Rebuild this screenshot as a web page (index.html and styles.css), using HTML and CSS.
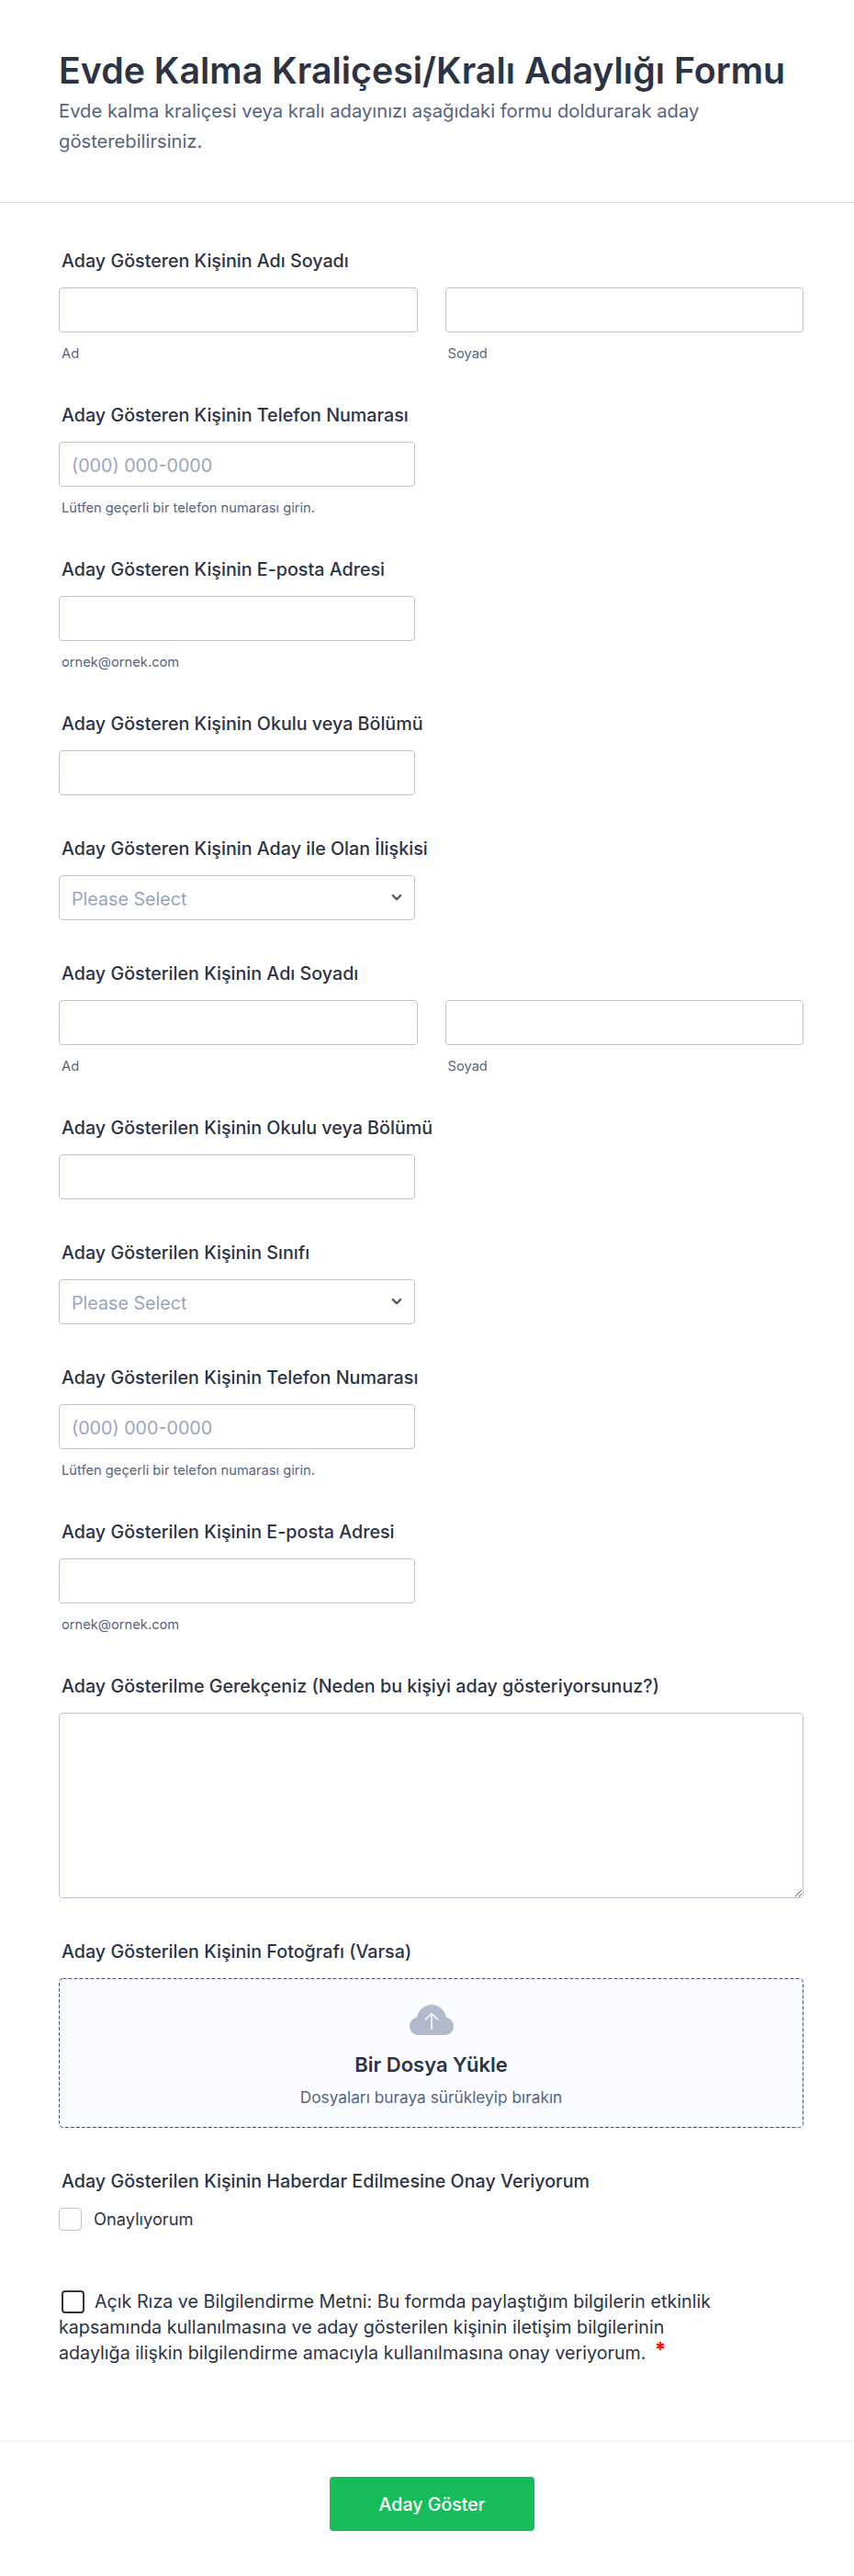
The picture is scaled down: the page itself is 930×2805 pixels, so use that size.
FILE: index.html
```html
<!DOCTYPE html>
<html lang="tr">
<head>
<meta charset="utf-8">
<title>Evde Kalma Kraliçesi/Kralı Adaylığı Formu</title>
<link rel="stylesheet" href="styles.css">
</head>
<body>
<form class="form">
  <header class="head">
    <h1 class="title">Evde Kalma Kraliçesi/Kralı Adaylığı Formu</h1>
    <p class="subtitle">Evde kalma kraliçesi veya kralı adayınızı aşağıdaki formu doldurarak aday gösterebilirsiniz.</p>
  </header>
  <div class="fields">
    <div class="field">
      <div class="label">Aday Gösteren Kişinin Adı Soyadı</div>
      <div class="name-row">
        <div class="name-col"><input class="input" type="text"><div class="sub">Ad</div></div>
        <div class="name-col"><input class="input" type="text"><div class="sub">Soyad</div></div>
      </div>
    </div>
    <div class="field">
      <div class="label">Aday Gösteren Kişinin Telefon Numarası</div>
      <input class="input short" type="text" placeholder="(000) 000-0000">
      <div class="sub">Lütfen geçerli bir telefon numarası girin.</div>
    </div>
    <div class="field">
      <div class="label">Aday Gösteren Kişinin E-posta Adresi</div>
      <input class="input short" type="text">
      <div class="sub">ornek@ornek.com</div>
    </div>
    <div class="field">
      <div class="label">Aday Gösteren Kişinin Okulu veya Bölümü</div>
      <input class="input short" type="text">
    </div>
    <div class="field">
      <div class="label">Aday Gösteren Kişinin Aday ile Olan İlişkisi</div>
      <div class="select-wrap">
        <select class="input select"><option>Please Select</option></select>
        <svg class="chevron" width="12" height="8" viewBox="0 0 12 8"><path d="M1.2 1.400 6 6.200l4.800-4.800" fill="none" stroke="#4a5270" stroke-width="2.200"/></svg>
      </div>
    </div>
    <div class="field">
      <div class="label">Aday Gösterilen Kişinin Adı Soyadı</div>
      <div class="name-row">
        <div class="name-col"><input class="input" type="text"><div class="sub">Ad</div></div>
        <div class="name-col"><input class="input" type="text"><div class="sub">Soyad</div></div>
      </div>
    </div>
    <div class="field">
      <div class="label">Aday Gösterilen Kişinin Okulu veya Bölümü</div>
      <input class="input short" type="text">
    </div>
    <div class="field">
      <div class="label">Aday Gösterilen Kişinin Sınıfı</div>
      <div class="select-wrap">
        <select class="input select"><option>Please Select</option></select>
        <svg class="chevron" width="12" height="8" viewBox="0 0 12 8"><path d="M1.2 1.400 6 6.200l4.800-4.800" fill="none" stroke="#4a5270" stroke-width="2.200"/></svg>
      </div>
    </div>
    <div class="field">
      <div class="label">Aday Gösterilen Kişinin Telefon Numarası</div>
      <input class="input short" type="text" placeholder="(000) 000-0000">
      <div class="sub">Lütfen geçerli bir telefon numarası girin.</div>
    </div>
    <div class="field">
      <div class="label">Aday Gösterilen Kişinin E-posta Adresi</div>
      <input class="input short" type="text">
      <div class="sub">ornek@ornek.com</div>
    </div>
    <div class="field">
      <div class="label">Aday Gösterilme Gerekçeniz (Neden bu kişiyi aday gösteriyorsunuz?)</div>
      <textarea class="input area"></textarea>
    </div>
    <div class="field">
      <div class="label">Aday Gösterilen Kişinin Fotoğrafı (Varsa)</div>
      <div class="upload">
        <svg class="dash" width="811" height="163" viewBox="0 0 811 163"><rect x=".5" y=".5" width="810" height="162" rx="4" fill="none" stroke="#4a5270" stroke-dasharray="4 2"/></svg>
        <svg class="cloud" width="48" height="33" viewBox="0 0 48 33"><path d="M10 33C4.400 33 0 28.800 0 23.400c0-4.800 3.400-8.800 8-9.600C9.400 5.800 16 0 24 0s14.600 5.800 16 13.800c4.600.8 8 4.800 8 9.600C48 28.800 43.600 33 38 33z" fill="#b3bacb"/><path d="M24 27V10M17 16.500 24 9.500l7 7" fill="none" stroke="#fbfcff" stroke-width="1.600"/></svg>
        <div class="upload-title">Bir Dosya Yükle</div>
        <div class="upload-sub">Dosyaları buraya sürükleyip bırakın</div>
      </div>
    </div>
    <div class="field check-field">
      <div class="label">Aday Gösterilen Kişinin Haberdar Edilmesine Onay Veriyorum</div>
      <div class="check-row"><span class="box"></span><span class="check-text">Onaylıyorum</span></div>
    </div>
    <p class="consent"><span class="box dark"></span>Açık Rıza ve Bilgilendirme Metni: Bu formda paylaştığım bilgilerin etkinlik kapsamında kullanılmasına ve aday gösterilen kişinin iletişim bilgilerinin adaylığa ilişkin bilgilendirme amacıyla kullanılmasına onay veriyorum. <span class="req">*</span></p>
  </div>
  <footer class="foot">
    <button class="submit" type="button">Aday Göster</button>
  </footer>
</form>
</body>
</html>
```
FILE: styles.css
```css
* { box-sizing: border-box; }
html, body { margin: 0; padding: 0; background: #fff; }
body { font-family: Inter, "Liberation Sans", sans-serif; color: #2c3345; }
.form { display: flex; flex-direction: column; height: 2805px; }
.head { height: 221px; padding: 50px 50px 0 64px; border-bottom: 1px solid #d8dae9; }
.title { margin: 0; font-size: 39.3px; line-height: 54px; font-weight: 600; color: #2c3345; white-space: nowrap; }
.subtitle { margin: 0; max-width: 720px; font-size: 20.2px; line-height: 33px; color: #57647e; }
.fields { padding: 51px 55px 0 64px; flex: 1; }
.field { margin-bottom: 46px; }
.label { padding-left: 3px; margin-bottom: 17px; font-size: 19.7px; line-height: 24px; font-weight: 500; color: #2c3345; }
.name-row { display: flex; gap: 30px; }
.name-col { flex: 1; }
.input { display: block; width: 100%; height: 49px; padding: 2px 12px 0 13px; border: 1px solid #bcc1d3; border-radius: 4px; background: #fff; font: 19.7px Inter, sans-serif; color: #2c3345; outline: none; }
.input::placeholder { color: #9aa5bc; opacity: 1; }
.short { width: 388px; }
.sub { margin-top: 14px; padding-left: 3px; font-size: 14.7px; line-height: 18px; color: #57647e; }
.select-wrap { position: relative; width: 388px; }
.select { appearance: none; color: #9aa5bc; }
.chevron { position: absolute; right: 14px; top: 20px; }
.area { height: 202px; padding: 10px 12px; resize: vertical; }
.upload { position: relative; height: 163px; padding-top: 29px; border-radius: 4px; background: #fbfcff; text-align: center; }
.dash { position: absolute; left: 0; top: 0; }
.cloud { display: block; margin: 0 auto; }
.upload-title { margin-top: 17px; font-size: 22px; line-height: 30px; font-weight: 600; color: #2c3345; }
.upload-sub { margin-top: 9px; font-size: 17.3px; line-height: 24px; color: #57647e; }
.check-field { margin-bottom: 63px; }
.check-row { display: flex; align-items: center; gap: 13px; }
.box { display: block; width: 25px; height: 25px; border: 1px solid #bcc1d3; border-radius: 4px; background: #fff; }
.check-text { font-size: 18.3px; line-height: 25px; color: #2c3345; }
.consent { position: relative; margin: 0; max-width: 720px; font-size: 19.7px; line-height: 28px; color: #2c3345; text-indent: 39px; }
.box.dark { position: absolute; left: 3px; top: 2px; width: 25px; height: 25px; border: 2px solid #2c3345; border-radius: 4px; }
.req { color: #f00; padding-left: 4px; font-size: 22px; font-weight: 700; line-height: 0; vertical-align: 3px; }
.foot { height: 147px; padding: 38px 0 0 11px; border-top: 1px solid #eaebf2; text-align: center; }
.submit { width: 223px; height: 59px; border: 0; border-radius: 4px; background: #18bd5b; color: #fff; font: 500 19.6px Inter, sans-serif; }
```
